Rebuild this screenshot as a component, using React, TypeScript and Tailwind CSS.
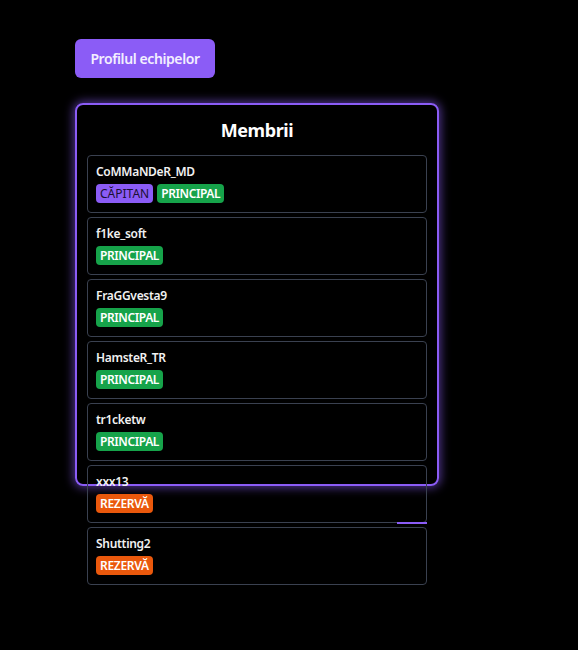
import React from 'react';

interface Member {
  name: string;
  roles: ('captain' | 'main' | 'reserve')[];
}

const members: Member[] = [
  { name: 'CoMMaNDeR_MD', roles: ['captain', 'main'] },
  { name: 'f1ke_soft', roles: ['main'] },
  { name: 'FraGGvesta9', roles: ['main'] },
  { name: 'HamsteR_TR', roles: ['main'] },
  { name: 'tr1cketw', roles: ['main'] },
  { name: 'xxx13', roles: ['reserve'] },
  { name: 'Shutting2', roles: ['reserve'] },
];

function RoleBadge({ role }: { role: Member['roles'][number] }) {
  if (role === 'captain') {
    return (
      <span className="h-[19px] px-[4px] flex items-center rounded-[4px] bg-[#8b5cf6] text-[#1a1033] text-[12px]">
        CĂPITAN
      </span>
    );
  }
  if (role === 'main') {
    return (
      <span className="h-[19px] px-[4px] flex items-center rounded-[4px] bg-[#16a34a] text-white text-[12px] font-semibold tracking-[-0.4px]">
        PRINCIPAL
      </span>
    );
  }
  return (
    <span className="h-[19px] px-[4px] flex items-center rounded-[4px] bg-[#ea580c] text-white text-[12px] font-semibold tracking-[-0.3px]">
      REZERVĂ
    </span>
  );
}

export default function App() {
  return (
    <div
      className="min-h-[650px] w-full bg-black pt-[39px] pl-[75px]"
      style={{ fontFamily: '"Noto Sans", "Open Sans", sans-serif' }}
    >
      <button className="h-[39px] w-[140px] rounded-md bg-[#8b5cf6] text-[#f3efff] text-sm font-semibold tracking-[-0.4px]">
        Profilul echipelor
      </button>

      {/* MEMBERS CARD */}
      <div className="mt-[25px] w-[364px] h-[383px] border-2 border-[#8b5cf6] rounded-lg shadow-[0_0_10px_2px_rgba(139,92,246,0.55)] px-[10px] pt-[11px]">
        <h2 className="text-center text-lg leading-7 font-bold text-white tracking-[-0.4px] mb-[11px]">Membrii</h2>
        <div className="flex flex-col gap-[4px]">
          {members.map((m, idx) => (
            <div
              key={m.name}
              className="relative h-[58px] border border-[#3a4150] rounded-[4px] px-[8px] pt-[8px]"
            >
              <div className="text-[12px] leading-4 font-semibold text-[#f1f1f1] tracking-[-0.3px]">{m.name}</div>
              <div className="flex gap-[4px] mt-[4px]">
                {m.roles.map((r) => (
                  <RoleBadge key={r} role={r} />
                ))}
              </div>
              {idx === 5 && (
                <div className="absolute right-[-1px] bottom-[-2px] w-[30px] h-[2px] bg-[#8b5cf6]" />
              )}
            </div>
          ))}
        </div>
      </div>
    </div>
  );
}
